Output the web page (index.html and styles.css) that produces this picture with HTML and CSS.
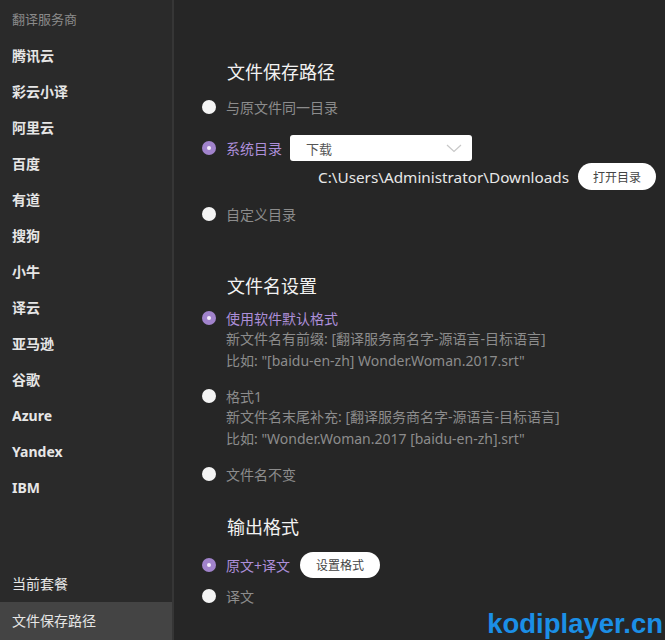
FILE: index.html
```html
<!DOCTYPE html>
<html lang="zh-CN">
<head>
<meta charset="UTF-8" />
<title>翻译设置 - 文件保存路径</title>
<link rel="stylesheet" href="styles.css">
</head>
<body>

<div class="app">

  <!-- Barre latérale -->
  <aside class="sidebar">
    <div class="side-title">翻译服务商</div>
    <div class="side-item bold">腾讯云</div>
    <div class="side-item bold">彩云小译</div>
    <div class="side-item bold">阿里云</div>
    <div class="side-item bold">百度</div>
    <div class="side-item bold">有道</div>
    <div class="side-item bold">搜狗</div>
    <div class="side-item bold">小牛</div>
    <div class="side-item bold">译云</div>
    <div class="side-item bold">亚马逊</div>
    <div class="side-item bold">谷歌</div>
    <div class="side-item bold">Azure</div>
    <div class="side-item bold">Yandex</div>
    <div class="side-item bold">IBM</div>
    <div class="side-spacer"></div>
    <div class="side-item">当前套餐</div>
    <div class="side-item active">文件保存路径</div>
  </aside>

  <!-- Contenu -->
  <main class="main">

    <h2 class="sec-title">文件保存路径</h2>
    <div class="option first">
      <span class="radio"></span><span class="label">与原文件同一目录</span>
    </div>
    <div class="option tall checked">
      <span class="radio"></span><span class="label">系统目录</span>
      <div class="select">
        <span>下载</span>
        <svg width="16" height="9" viewBox="0 0 16 9"><path d="M1 1 L8 7.5 L15 1" fill="none" stroke="#c8c8c8" stroke-width="1.2"/></svg>
      </div>
    </div>
    <div class="path-row">
      <span class="path">C:\Users\Administrator\Downloads</span>
      <button class="pill">打开目录</button>
    </div>
    <div class="option after-path">
      <span class="radio"></span><span class="label">自定义目录</span>
    </div>

    <h2 class="sec-title sec2">文件名设置</h2>
    <div class="option first2 checked">
      <span class="radio"></span><span class="label">使用软件默认格式</span>
    </div>
    <div class="desc">新文件名有前缀: [翻译服务商名字-源语言-目标语言]</div>
    <div class="desc">比如: "[baidu-en-zh] Wonder.Woman.2017.srt"</div>
    <div class="option">
      <span class="radio"></span><span class="label">格式1</span>
    </div>
    <div class="desc">新文件名末尾补充: [翻译服务商名字-源语言-目标语言]</div>
    <div class="desc">比如: "Wonder.Woman.2017 [baidu-en-zh].srt"</div>
    <div class="option">
      <span class="radio"></span><span class="label">文件名不变</span>
    </div>

    <h2 class="sec-title sec3">输出格式</h2>
    <div class="option tall first checked">
      <span class="radio"></span><span class="label">原文+译文</span>
      <button class="pill">设置格式</button>
    </div>
    <div class="option last">
      <span class="radio"></span><span class="label">译文</span>
    </div>

  </main>

</div>

<div class="watermark">kodiplayer.cn</div>

</body>
</html>
```

FILE: styles.css
```css
body { margin: 0; background: #262626; font-family: "Noto Sans", "Noto Sans CJK SC", sans-serif; overflow: hidden; }
.app { display: flex; height: 640px; }

.sidebar { width: 172px; border-right: 2px solid #363636; background: #2a2a2a; display: flex; flex-direction: column; }
.side-title { height: 38px; line-height: 38px; padding-left: 12px; font-size: 13px; color: #8a8a8a; }
.side-item { height: 36px; line-height: 36px; padding-left: 12px; font-size: 14px; color: #e6e6e6; }
.side-item.bold { font-weight: bold; }
.side-item.active { height: 38px; line-height: 38px; background: #444444; }
.side-spacer { flex: 1; }

.main { flex: 1; padding: 60px 0 0 28px; }
.sec-title { margin: 0 0 0 25px; height: 24px; line-height: 24px; font-size: 18px; font-weight: normal; color: #f2f2f2; }
.sec2 { margin-top: 50px; }
.sec3 { margin-top: 31px; }

.option { display: flex; align-items: center; height: 20px; margin-top: 14px; font-size: 14px; color: #8c8c8c; }
.option.first { margin-top: 13px; }
.option.first2 { margin-top: 10px; }
.option.tall { height: 26px; }
.option.last { margin-top: 8px; }
.option.after-path { margin-top: 14px; }
.option:not(.first):not(.first2).tall { margin-top: 18px; }

.radio { width: 14px; height: 14px; border-radius: 50%; background: #f4f4f4; margin-right: 10px; flex-shrink: 0; position: relative; }
.checked .radio { background: #a183cc; }
.checked .radio::after { content: ""; position: absolute; left: 5px; top: 5px; width: 4px; height: 4px; border-radius: 50%; background: #f5eefc; }
.checked .label { color: #ad8fd9; }

.select { display: flex; align-items: center; justify-content: space-between; width: 182px; height: 26px; margin-left: 8px; padding: 0 10px 0 16px; box-sizing: border-box; background: #fff; border-radius: 3px; font-size: 13px; color: #555; }

.path-row { display: flex; align-items: center; height: 27px; margin: 2px 0 0 116px; white-space: nowrap; }
.path { font-size: 15.3px; color: #e8e8e8; }
.pill { height: 27px; padding: 0 15px; margin-left: 9px; border: none; border-radius: 14px; background: #fff; font-family: inherit; font-size: 12px; color: #444; white-space: nowrap; cursor: pointer; }
.option .pill { height: 26px; margin-left: 10px; padding: 0 16px; }

.desc { height: 22px; line-height: 22px; padding-left: 24px; font-size: 14px; color: #8c8c8c; }

.watermark { position: absolute; right: 2px; bottom: 0; font-family: "Liberation Sans", Arial, sans-serif; font-weight: bold; font-size: 27.5px; color: #1b8fe6; }
```
